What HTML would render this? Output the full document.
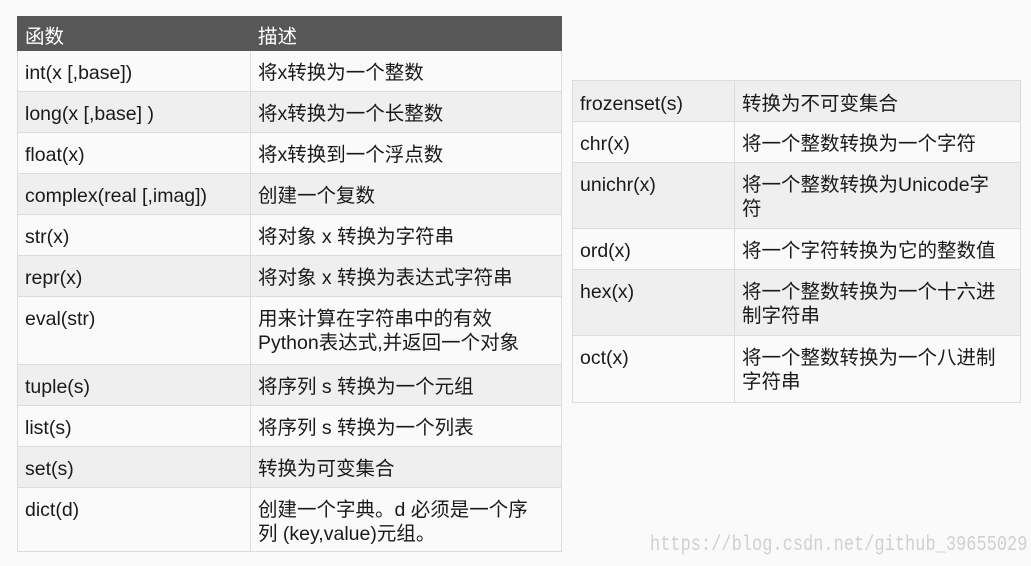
<!DOCTYPE html>
<html><head><meta charset="utf-8"><style>
html,body{margin:0;padding:0;background:#fafafa;width:1031px;height:566px;overflow:hidden;font-family:"Liberation Sans","Noto Sans CJK SC",sans-serif;color:#1a1a1a}
table{position:absolute;border-collapse:collapse;table-layout:fixed;font-size:19.5px;line-height:24px}
td{border:1px solid #dcdcdc;vertical-align:top;padding:10px 7px 0 7px;box-sizing:border-box;overflow:hidden;white-space:nowrap}
tr.a td{background:#fafafa}
tr.b td{background:#efefef}
tr.h td{background:#575757;color:#fff;border-color:#575757;padding-top:8px}
#w{position:absolute;left:650px;top:536px;font-family:"Liberation Mono",monospace;font-size:17px;color:#d0d0d0;letter-spacing:0px;transform:scaleY(1.25)}
</style></head><body>
<table style="left:17px;top:16px;width:544px">
<col style="width:233px"><col style="width:311px">
<tr class="h" style="height:34px"><td>函数</td><td>描述</td></tr>
<tr class="a" style="height:41px"><td>int(x [,base])</td><td>将x转换为一个整数</td></tr>
<tr class="b" style="height:41px"><td>long(x [,base] )</td><td>将x转换为一个长整数</td></tr>
<tr class="a" style="height:41px"><td>float(x)</td><td>将x转换到一个浮点数</td></tr>
<tr class="b" style="height:41px"><td>complex(real [,imag])</td><td>创建一个复数</td></tr>
<tr class="a" style="height:41px"><td>str(x)</td><td>将对象 x 转换为字符串</td></tr>
<tr class="b" style="height:41px"><td>repr(x)</td><td>将对象 x 转换为表达式字符串</td></tr>
<tr class="a" style="height:68px"><td>eval(str)</td><td>用来计算在字符串中的有效<br>Python表达式,并返回一个对象</td></tr>
<tr class="b" style="height:41px"><td>tuple(s)</td><td>将序列 s 转换为一个元组</td></tr>
<tr class="a" style="height:41px"><td>list(s)</td><td>将序列 s 转换为一个列表</td></tr>
<tr class="b" style="height:41px"><td>set(s)</td><td>转换为可变集合</td></tr>
<tr class="a" style="height:64px"><td>dict(d)</td><td>创建一个字典。d 必须是一个序<br>列 (key,value)元组。</td></tr>
</table>
<table style="left:572px;top:80px;width:448px">
<col style="width:162px"><col style="width:286px">
<tr class="b" style="height:41px"><td style="padding-top:11px">frozenset(s)</td><td style="padding-top:11px">转换为不可变集合</td></tr>
<tr class="a" style="height:41px"><td>chr(x)</td><td>将一个整数转换为一个字符</td></tr>
<tr class="b" style="height:66px"><td>unichr(x)</td><td>将一个整数转换为Unicode字<br>符</td></tr>
<tr class="a" style="height:41px"><td>ord(x)</td><td>将一个字符转换为它的整数值</td></tr>
<tr class="b" style="height:66px"><td>hex(x)</td><td>将一个整数转换为一个十六进<br>制字符串</td></tr>
<tr class="a" style="height:67px"><td>oct(x)</td><td>将一个整数转换为一个八进制<br>字符串</td></tr>
</table>
<div id="w">https://blog.csdn.net/github_39655029</div>
</body></html>
